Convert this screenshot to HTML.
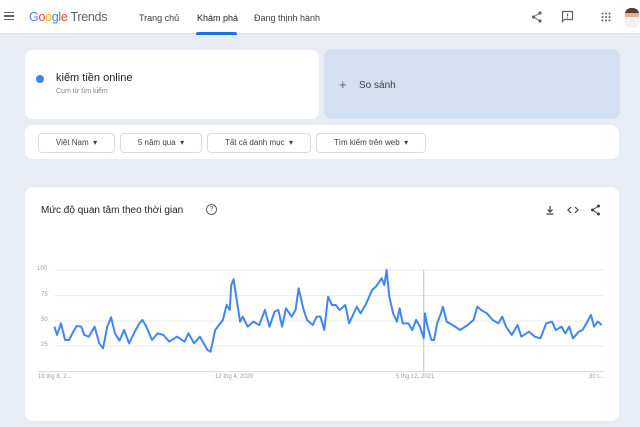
<!DOCTYPE html>
<html><head><meta charset="utf-8"><style>
*{margin:0;padding:0;box-sizing:border-box}
body{width:640px;height:427px;overflow:hidden;background:#e8edf5;font-family:"Liberation Sans",sans-serif;color:#202124;position:relative}
.hdr{position:absolute;left:0;top:0;width:640px;height:34px;background:#fff;border-bottom:1px solid #dde3ec}
.a{position:absolute}
.nav{font-size:9px;color:#3c4043;top:13px}
.card{position:absolute;background:#fff;border-radius:8px}
.btn{position:absolute;top:133px;height:20px;border:1px solid #dadce0;border-radius:4px;font-size:8px;color:#3c4043;line-height:18px;text-align:center;background:#fff}
.ax{font-size:6px;color:#9aa0a6;position:absolute}
</style></head><body>
<div class="hdr">
<div class="a" style="left:4px;top:12px;width:10px">
<div style="height:1.2px;background:#5f6368;margin-bottom:2.3px"></div><div style="height:1.2px;background:#5f6368;margin-bottom:2.3px"></div><div style="height:1.2px;background:#5f6368"></div></div>
<div class="a" style="left:29px;top:10px;font-size:12.5px;letter-spacing:-0.3px"><span style="color:#4285f4">G</span><span style="color:#ea4335">o</span><span style="color:#fbbc05">o</span><span style="color:#4285f4">g</span><span style="color:#34a853">l</span><span style="color:#ea4335">e</span> <span style="color:#5f6368">Trends</span></div>
<div class="a nav" style="left:139px">Trang chủ</div>
<div class="a nav" style="left:197px;color:#202124">Khám phá</div>
<div class="a" style="left:196px;top:32px;width:41px;height:2.5px;background:#1a73e8;border-radius:2px 2px 0 0"></div>
<div class="a nav" style="left:254px">Đang thịnh hành</div>
<svg class="a" style="left:530px;top:10px" width="14" height="14" viewBox="0 0 14 14"><circle cx="10" cy="3" r="1.6" fill="#5f6368"/><circle cx="3.5" cy="7" r="1.6" fill="#5f6368"/><circle cx="10" cy="11" r="1.6" fill="#5f6368"/><path d="M10 3L3.5 7L10 11" stroke="#5f6368" fill="none" stroke-width="1"/></svg>
<svg class="a" style="left:561px;top:10px" width="13" height="13" viewBox="0 0 13 13"><path d="M1.5 1.5h10v8h-8l-2 2z" fill="none" stroke="#5f6368" stroke-width="1.2"/><path d="M6.5 3.5v3M6.5 7.5v1" stroke="#5f6368" stroke-width="1.2"/></svg>
<svg class="a" style="left:601px;top:12px" width="10" height="10" viewBox="0 0 10 10" fill="#5f6368"><circle cx="1.5" cy="1.5" r="1"/><circle cx="5" cy="1.5" r="1"/><circle cx="8.5" cy="1.5" r="1"/><circle cx="1.5" cy="5" r="1"/><circle cx="5" cy="5" r="1"/><circle cx="8.5" cy="5" r="1"/><circle cx="1.5" cy="8.5" r="1"/><circle cx="5" cy="8.5" r="1"/><circle cx="8.5" cy="8.5" r="1"/></svg>
<div class="a" style="left:625px;top:8px;width:14px;height:20px;border-radius:6px;background:linear-gradient(#5a3a2a 0 25%,#e0b090 25% 45%,#f2f2f2 45%)"></div>
</div>
<div class="card" style="left:25px;top:50px;width:294px;height:69px"></div>
<div class="a" style="left:36px;top:75px;width:8px;height:8px;border-radius:50%;background:#4285f4"></div>
<div class="a" style="left:56px;top:72px;font-size:11px">kiếm tiền online</div>
<div class="a" style="left:56px;top:88px;font-size:7px;color:#80868b">Cụm từ tìm kiếm</div>
<div class="card" style="left:324px;top:49px;width:296px;height:70px;background:#d2e0f2"></div>
<div class="a" style="left:339px;top:78px;font-size:13px;color:#5f6368;line-height:13px">+</div>
<div class="a" style="left:359px;top:80px;font-size:10px;color:#3c4043">So sánh</div>
<div class="card" style="left:25px;top:125px;width:594px;height:34px"></div>
<div class="btn" style="left:38px;width:77px">Việt Nam &nbsp;▾</div>
<div class="btn" style="left:120px;width:82px">5 năm qua &nbsp;▾</div>
<div class="btn" style="left:207px;width:104px">Tất cả danh mục &nbsp;▾</div>
<div class="btn" style="left:316px;width:110px">Tìm kiếm trên web &nbsp;▾</div>
<div class="card" style="left:25px;top:187px;width:594px;height:234px"></div>
<div class="a" style="left:41px;top:205px;font-size:10px">Mức độ quan tâm theo thời gian</div>
<div class="a" style="left:206px;top:204px;width:11px;height:11px;border:1px solid #5f6368;border-radius:50%;font-size:7px;text-align:center;line-height:9px;color:#5f6368">?</div>
<svg class="a" style="left:545px;top:205px" width="10" height="10" viewBox="0 0 10 10"><path d="M5 1v6M2.5 4.5L5 7l2.5-2.5M1.5 9h7" stroke="#3c4043" fill="none" stroke-width="1.2"/></svg>
<svg class="a" style="left:567px;top:205px" width="12" height="10" viewBox="0 0 12 10"><path d="M4 2L1 5l3 3M8 2l3 3-3 3" stroke="#3c4043" fill="none" stroke-width="1.2"/></svg>
<svg class="a" style="left:590px;top:204px" width="11" height="12" viewBox="0 0 11 12"><circle cx="8.5" cy="2" r="1.5" fill="#3c4043"/><circle cx="2.5" cy="6" r="1.5" fill="#3c4043"/><circle cx="8.5" cy="10" r="1.5" fill="#3c4043"/><path d="M8.5 2L2.5 6l6 4" stroke="#3c4043" fill="none"/></svg>
<div class="ax" style="left:37px;top:266px">100</div>
<div class="ax" style="left:41px;top:292px">75</div>
<div class="ax" style="left:41px;top:317px">50</div>
<div class="ax" style="left:41px;top:342px">25</div>
<div class="ax" style="left:38px;top:374px">19 thg 8, 2...</div>
<div class="ax" style="left:215px;top:374px">12 thg 4, 2020</div>
<div class="ax" style="left:396px;top:374px">5 thg 12, 2021</div>
<div class="ax" style="left:589px;top:374px">30 t...</div>
<svg class="a" style="left:0;top:0" width="640" height="427">
<g transform="translate(20,190) scale(0.3827,0.3333)">
<line x1="90" y1="240" x2="1525" y2="240" stroke="#e8eaed" vector-effect="non-scaling-stroke"/>
<line x1="90" y1="317" x2="1525" y2="317" stroke="#e8eaed" vector-effect="non-scaling-stroke"/>
<line x1="90" y1="393" x2="1525" y2="393" stroke="#e8eaed" vector-effect="non-scaling-stroke"/>
<line x1="90" y1="468" x2="1525" y2="468" stroke="#e8eaed" vector-effect="non-scaling-stroke"/>
<line x1="45" y1="545" x2="1525" y2="545" stroke="#dadce0" vector-effect="non-scaling-stroke"/>
<line x1="1055" y1="240" x2="1055" y2="545" stroke="#c0c4c8" vector-effect="non-scaling-stroke"/>
<polyline fill="none" stroke="#4285f4" stroke-width="2" stroke-linejoin="round" vector-effect="non-scaling-stroke" points="90,410 97,435 107,400 118,450 128,450 137,430 148,408 160,410 168,435 180,440 195,410 207,460 217,475 228,410 238,382 248,430 260,452 272,420 285,460 300,425 312,400 320,390 330,410 345,450 360,430 375,435 390,455 410,440 430,455 440,430 455,460 470,440 490,480 498,485 510,420 530,390 540,345 548,360 552,285 558,268 565,320 575,395 582,380 595,410 610,395 625,405 640,360 652,410 665,365 675,360 685,410 695,355 710,380 720,360 728,295 740,355 750,390 765,405 775,380 785,380 795,420 805,320 815,345 825,345 835,360 850,345 860,400 870,375 880,350 890,370 905,340 920,300 930,290 945,265 952,285 958,240 965,320 975,370 985,395 992,355 1000,400 1015,400 1025,420 1035,390 1045,410 1055,445 1058,370 1065,410 1075,450 1082,450 1090,400 1100,370 1105,350 1115,395 1130,405 1150,420 1170,405 1185,390 1195,350 1205,360 1220,370 1235,390 1250,400 1260,380 1270,410 1285,435 1300,405 1310,440 1330,425 1345,440 1360,445 1375,400 1390,395 1400,420 1415,410 1425,430 1435,410 1445,445 1460,425 1470,420 1480,400 1492,375 1500,410 1510,395 1520,405"/>
</g></svg>
</body></html>
